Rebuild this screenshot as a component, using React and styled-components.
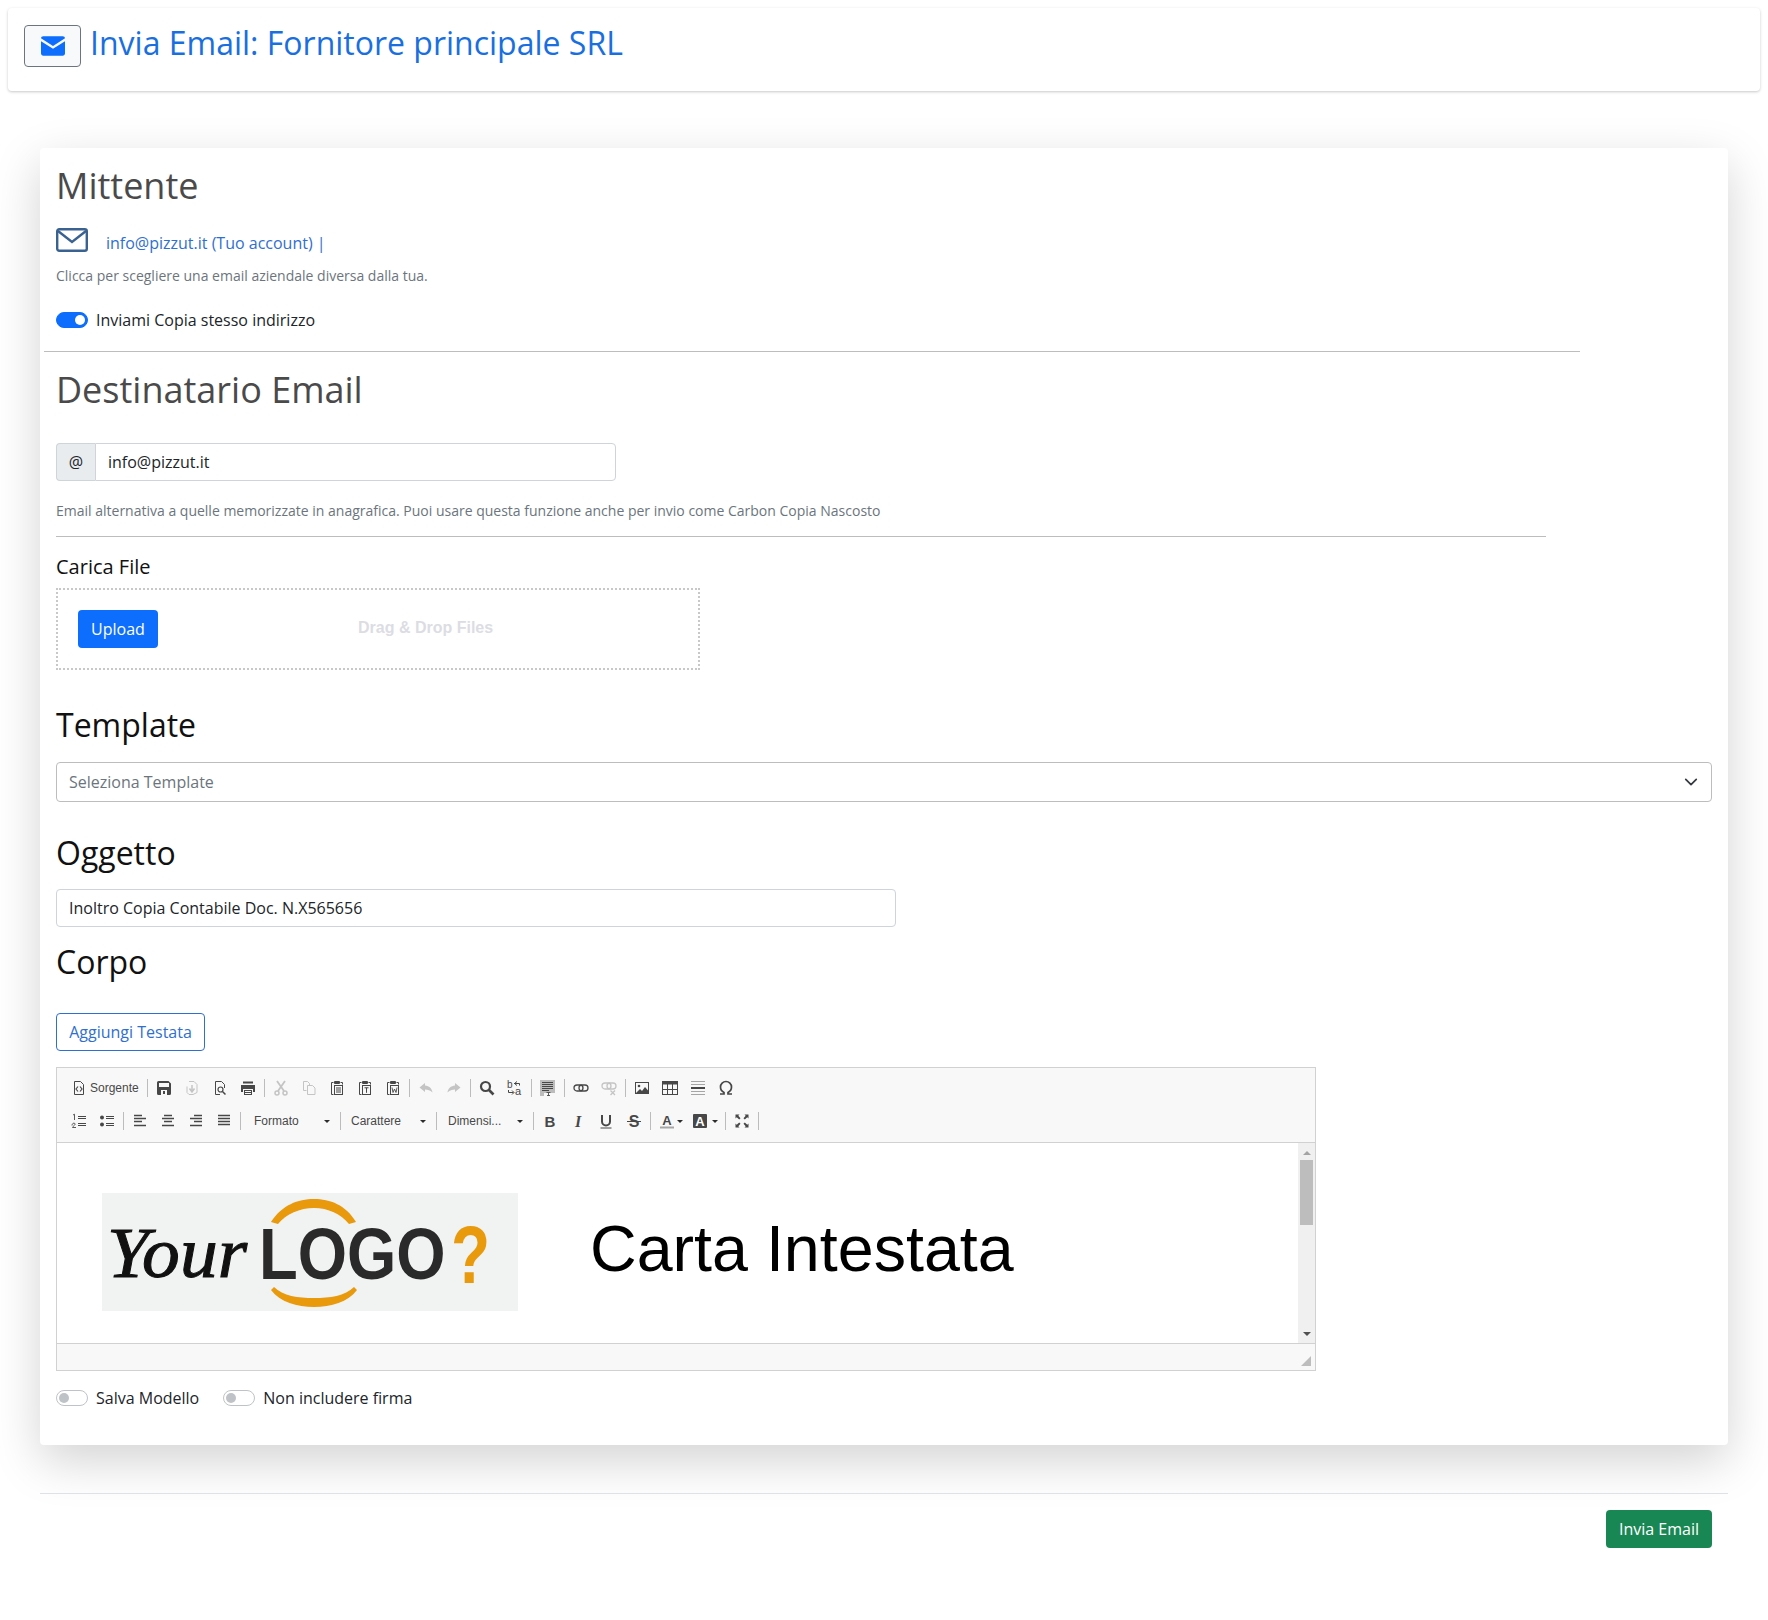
import styled, { createGlobalStyle } from "styled-components";

const GlobalStyle = createGlobalStyle`
  html, body { margin: 0; padding: 0; background: #fff; }
  body {
    font-family: "Open Sans", "Liberation Sans", sans-serif;
    font-size: 16px;
    line-height: 24px;
    color: #212529;
    min-height: 1620px;
  }
  * { box-sizing: border-box; }
`;

const DARK = "#474747";
const GREY = "#c4c4c4";

function Ico({ children, color = DARK }) {
  return (
    <svg width="16" height="16" viewBox="0 0 16 16" fill="none" stroke="none" style={{ color }}>
      {children}
    </svg>
  );
}

const icons = {
  source: (
    <Ico>
      <path d="M3.500 1.500h6l3 3v10h-9z" stroke="currentColor" />
      <path d="M7 6.500L5 9l2 2.500M9 6.500L11 9l-2 2.500" stroke="currentColor" strokeWidth="1.200" />
    </Ico>
  ),
  save: (
    <Ico>
      <path fillRule="evenodd" d="M1 2.500A1.500 1.500 0 0 1 2.500 1h10L15 3.500v10a1.500 1.500 0 0 1-1.500 1.500h-11A1.500 1.500 0 0 1 1 13.500zM3 3v4h10V3zM5 10v5h6v-5z" fill="currentColor" />
      <rect x="7" y="11" width="2" height="3" fill="currentColor" />
    </Ico>
  ),
  template: (
    <Ico color={GREY}>
      <path d="M5 1.500h5l3 3v8l-4 2H5l-2-2v-6" stroke="currentColor" />
      <path d="M8 5v6M5.500 8.500L8 12l2.500-3.500" stroke="currentColor" strokeWidth="1.500" />
    </Ico>
  ),
  preview: (
    <Ico>
      <path d="M8 14.500H3.500v-13h6l3 3V8" stroke="currentColor" />
      <circle cx="8.500" cy="9.500" r="2.500" stroke="currentColor" strokeWidth="1.200" />
      <path d="M10.500 11.500l3 3" stroke="currentColor" strokeWidth="1.500" />
    </Ico>
  ),
  print: (
    <Ico>
      <path d="M3 1.500h10v2H3z" fill="currentColor" />
      <path fillRule="evenodd" d="M1 5h14v7h-2V9H3v3H1z" fill="currentColor" />
      <path fillRule="evenodd" d="M4 10h8v5H4zM5 11v1h6v-1zM5 13v1h6v-1z" fill="currentColor" />
    </Ico>
  ),
  cut: (
    <Ico color={GREY}>
      <path d="M4 1l7 10M12 1L5 11" stroke="currentColor" strokeWidth="1.800" />
      <circle cx="4" cy="13" r="2" stroke="currentColor" strokeWidth="1.500" />
      <circle cx="12" cy="13" r="2" stroke="currentColor" strokeWidth="1.500" />
    </Ico>
  ),
  copy: (
    <Ico color={GREY}>
      <path d="M2.500 1.500h4l2 2v2M2.500 1.500v9h3" stroke="currentColor" />
      <path d="M6.500 5.500h5l2.500 2.500v6.500H6.500z" stroke="currentColor" />
    </Ico>
  ),
  paste: (
    <Ico>
      <path d="M4.500 2.500h-2v12h2" stroke="currentColor" />
      <path d="M11.500 2.500h2v2" stroke="currentColor" />
      <rect x="5" y="1" width="6" height="3" rx="1" fill="currentColor" />
      <rect x="5.500" y="5.500" width="8" height="9" stroke="currentColor" />
      <path d="M7 8h5M7 10h5M7 12h5" stroke="currentColor" />
    </Ico>
  ),
  pasteText: (
    <Ico>
      <path d="M4.500 2.500h-2v12h2" stroke="currentColor" />
      <path d="M11.500 2.500h2v2" stroke="currentColor" />
      <rect x="5" y="1" width="6" height="3" rx="1" fill="currentColor" />
      <rect x="5.500" y="5.500" width="8" height="9" stroke="currentColor" />
      <path d="M7.500 7.800h4M9.500 7.800v5" stroke="currentColor" />
    </Ico>
  ),
  pasteWord: (
    <Ico>
      <path d="M4.500 2.500h-2v12h2" stroke="currentColor" />
      <path d="M11.500 2.500h2v2" stroke="currentColor" />
      <rect x="5" y="1" width="6" height="3" rx="1" fill="currentColor" />
      <rect x="5.500" y="5.500" width="8" height="9" stroke="currentColor" />
      <path d="M7 7.500l1 5 1.500-3.500 1.500 3.500 1-5" stroke="currentColor" strokeWidth=".9" />
    </Ico>
  ),
  undo: (
    <Ico color={GREY}>
      <path d="M7 3L1.500 7.500 7 12V9.500c3 0 5 .8 7.500 3C14 8.500 11 5.800 7 5.500z" fill="currentColor" />
    </Ico>
  ),
  redo: (
    <Ico color={GREY}>
      <path d="M9 3l5.500 4.500L9 12V9.500c-3 0-5 .8-7.500 3C2 8.500 5 5.800 9 5.500z" fill="currentColor" />
    </Ico>
  ),
  search: (
    <Ico>
      <circle cx="6.500" cy="6.500" r="4.500" stroke="currentColor" strokeWidth="2.200" />
      <path d="M10 10l4.500 4.500" stroke="currentColor" strokeWidth="2.600" />
    </Ico>
  ),
  replace: (
    <Ico>
      <text x="0" y="8" fontSize="10" fontFamily="Liberation Sans" fill="currentColor">b</text>
      <text x="8" y="15" fontSize="11" fontFamily="Liberation Sans" fill="currentColor">a</text>
      <path d="M7 3.500h5.500v2M10 1.500L7.500 3.500 10 5.500" stroke="currentColor" />
      <path d="M1.500 10v2.500h5M5 10.500l2 2-2 2" stroke="currentColor" />
    </Ico>
  ),
  blocks: (
    <Ico>
      <rect x="0" y="0" width="15" height="13" fill="#bcbcbc" />
      <rect x="0" y="13" width="4" height="3" fill="#bcbcbc" />
      <path d="M2 2.500h11M2 4.500h11M2 6.500h11M2 8.500h11M2 10.500h7" stroke="currentColor" />
      <path d="M6.500 12.500h4M8.500 12.500v3M7 15.500h3" stroke="currentColor" strokeWidth=".9" />
    </Ico>
  ),
  link: (
    <Ico>
      <rect x="1" y="5" width="9" height="6" rx="3" stroke="currentColor" strokeWidth="1.300" />
      <rect x="6" y="5" width="9" height="6" rx="3" stroke="currentColor" strokeWidth="1.300" />
    </Ico>
  ),
  unlink: (
    <Ico color={GREY}>
      <rect x="1" y="3" width="9" height="6" rx="3" stroke="currentColor" strokeWidth="1.300" />
      <rect x="6" y="3" width="9" height="6" rx="3" stroke="currentColor" strokeWidth="1.300" />
      <path d="M9.500 10.500l4.500 4.500M14 10.500L9.500 15" stroke="currentColor" strokeWidth="1.300" />
    </Ico>
  ),
  image: (
    <Ico>
      <rect x="1.500" y="2.500" width="13" height="11" stroke="currentColor" />
      <circle cx="5" cy="6" r="1.300" fill="currentColor" />
      <path d="M2 13l4-4 2 2 3-4 3.500 4v2z" fill="currentColor" />
    </Ico>
  ),
  table: (
    <Ico>
      <rect x="0.500" y="1.500" width="15" height="13" stroke="currentColor" />
      <rect x="0.500" y="1.500" width="15" height="3" fill="currentColor" />
      <path d="M5.500 4v10M10.500 4v10M1 9.500h14" stroke="currentColor" />
    </Ico>
  ),
  hr: (
    <Ico>
      <path d="M1 1.500h14M1 4.500h14M1 11.500h14M1 14.500h14" stroke="#a6a6a6" />
      <path d="M1 8h14" stroke="currentColor" strokeWidth="2" />
    </Ico>
  ),
  omega: (
    <Ico>
      <path d="M2 14h4v-1.500C4 11.500 2.500 9.500 2.500 7A5.500 5.500 0 0 1 13.500 7c0 2.500-1.500 4.500-3.500 5.500V14h4" stroke="currentColor" strokeWidth="1.700" />
    </Ico>
  ),
  ol: (
    <Ico>
      <path d="M7 3.500h8M7 5.500h8M7 10.500h8M7 12.500h8" stroke="currentColor" />
      <path d="M2 2l1.500-.8V7M1 12.500c0-3 3.500-3 3-1-.2.800-2 1.500-2.500 3H5" stroke="currentColor" strokeWidth=".9" />
    </Ico>
  ),
  ul: (
    <Ico>
      <path d="M7 3.500h8M7 5.500h8M7 10.500h8M7 12.500h8" stroke="currentColor" />
      <circle cx="3" cy="4.500" r="2" fill="currentColor" />
      <circle cx="3" cy="11.500" r="2" fill="currentColor" />
    </Ico>
  ),
  left: (
    <Ico>
      <path d="M2 2.500h8M2 5.500h12M2 8.500h8M2 12.500h12" stroke="currentColor" strokeWidth="1.500" />
    </Ico>
  ),
  center: (
    <Ico>
      <path d="M4 2.500h8M2 5.500h12M4 8.500h8M2 12.500h12" stroke="currentColor" strokeWidth="1.500" />
    </Ico>
  ),
  right: (
    <Ico>
      <path d="M6 2.500h8M2 5.500h12M6 8.500h8M2 12.500h12" stroke="currentColor" strokeWidth="1.500" />
    </Ico>
  ),
  justify: (
    <Ico>
      <path d="M2 2.500h12M2 5.500h12M2 8.500h12M2 11.500h12" stroke="currentColor" strokeWidth="1.500" />
    </Ico>
  ),
  bold: (
    <Ico>
      <text x="8" y="13.500" textAnchor="middle" fontSize="15" fontWeight="700" fontFamily="Liberation Sans" fill="currentColor">B</text>
    </Ico>
  ),
  italic: (
    <Ico>
      <text x="8" y="13.500" textAnchor="middle" fontSize="16" fontWeight="700" fontStyle="italic" fontFamily="Liberation Serif" fill="currentColor">I</text>
    </Ico>
  ),
  underline: (
    <Ico>
      <path d="M4 2v6.500a4 4 0 0 0 8 0V2" stroke="currentColor" strokeWidth="2" />
      <path d="M2.500 15h11" stroke="currentColor" />
    </Ico>
  ),
  strike: (
    <Ico>
      <text x="8" y="14" textAnchor="middle" fontSize="16" fontWeight="700" fontFamily="Liberation Sans" fill="currentColor">S</text>
      <path d="M1 8.500h14" stroke="currentColor" />
    </Ico>
  ),
  textColor: (
    <Ico>
      <text x="8" y="11.500" textAnchor="middle" fontSize="13" fontWeight="700" fontFamily="Liberation Sans" fill="currentColor">A</text>
      <rect x="1" y="13.500" width="14" height="2" fill="#a6a6a6" />
    </Ico>
  ),
  bgColor: (
    <Ico>
      <rect x="1" y="1" width="14" height="14" rx="1" fill="currentColor" />
      <text x="8" y="12.500" textAnchor="middle" fontSize="13" fontWeight="700" fontFamily="Liberation Sans" fill="#fff">A</text>
    </Ico>
  ),
  maximize: (
    <Ico>
      <path d="M1.500 1.500h4l-1.200 1.200 2.200 2.500-1.300 1.300-2.500-2.200-1.200 1.200zM14.500 1.500h-4l1.200 1.200-2.200 2.500 1.300 1.300 2.500-2.200 1.200 1.200zM1.500 14.500h4l-1.200-1.200 2.200-2.500-1.300-1.300-2.500 2.200-1.200-1.200zM14.500 14.500h-4l1.200-1.200-2.200-2.500 1.300-1.300 2.500 2.200 1.200-1.200z" fill="currentColor" />
    </Ico>
  ),
};

const topTools = ["|", "save", "template", "preview", "print", "|", "cut", "copy", "paste", "pasteText", "pasteWord", "|", "undo", "redo", "|", "search", "replace", "|", "blocks", "|", "link", "unlink", "|", "image", "table", "hr", "omega"];

export default function App() {
  return (
    <>
      <GlobalStyle />
      <Header>
        <IconButton>
          <svg width="24" height="24" viewBox="0 0 16 16" fill="#0d6efd">
            <path d="M1.500 1.500h13c.8 0 1.500.6 1.500 1.400L8 8 0 2.900c0-.8.700-1.400 1.500-1.400z" />
            <path d="M0 4.800l8 5 8-5V13c0 .8-.7 1.500-1.500 1.500h-13C.7 14.500 0 13.800 0 13z" />
          </svg>
        </IconButton>
        <Title>Invia Email: Fornitore principale SRL</Title>
      </Header>

      <Card>
        <SectionTitle>Mittente</SectionTitle>
        <SenderRow>
          <svg width="32" height="24" viewBox="0 0 32 24" fill="none" stroke="#3a6291" strokeWidth="2.400">
            <rect x="1.200" y="1.200" width="29.600" height="21.600" rx="2" />
            <path d="M2 3l14 11L30 3" />
          </svg>
          <SenderLink>info@pizzut.it (Tuo account) |</SenderLink>
        </SenderRow>
        <Help $top={9}>Clicca per scegliere una email aziendale diversa dalla tua.</Help>
        <SwitchRow $top={22}>
          <Switch $on />
          <span>Inviami Copia stesso indirizzo</span>
        </SwitchRow>
        <Rule $left={-12} $width={1536} $top={19} />
        <SectionTitle $top={16}>Destinatario Email</SectionTitle>
        <InputGroup>
          <Addon>@</Addon>
          <GroupInput defaultValue="info@pizzut.it" />
        </InputGroup>
        <Help $top={19}>
          Email alternativa a quelle memorizzate in anagrafica. Puoi usare questa funzione anche per invio come Carbon Copia Nascosto
        </Help>
        <Rule $width={1490} $top={15} />
        <UploadLabel>Carica File</UploadLabel>
        <DropZone>
          <UploadButton>Upload</UploadButton>
          <DropText>Drag &amp; Drop Files</DropText>
        </DropZone>
        <FieldTitle $top={33}>Template</FieldTitle>
        <SelectBox>
          <span>Seleziona Template</span>
          <svg width="14" height="14" viewBox="0 0 16 16" fill="none" stroke="#343a40" strokeWidth="2" strokeLinecap="round" strokeLinejoin="round">
            <path d="M2 5l6 6 6-6" />
          </svg>
        </SelectBox>
        <FieldTitle $top={29}>Oggetto</FieldTitle>
        <SubjectInput defaultValue="Inoltro Copia Contabile Doc. N.X565656" />
        <FieldTitle $top={13}>Corpo</FieldTitle>
        <OutlineButton>Aggiungi Testata</OutlineButton>

        <Editor>
          <Toolbar>
            <ToolRow>
              <ToolButton $wide>
                {icons.source}
                <ToolLabel>Sorgente</ToolLabel>
              </ToolButton>
              {topTools.map((name, i) =>
                name === "|" ? <ToolSep key={i} /> : <ToolButton key={i}>{icons[name]}</ToolButton>
              )}
            </ToolRow>
            <ToolRow>
              <ToolButton>{icons.ol}</ToolButton>
              <ToolButton>{icons.ul}</ToolButton>
              <ToolSep />
              <ToolButton>{icons.left}</ToolButton>
              <ToolButton>{icons.center}</ToolButton>
              <ToolButton>{icons.right}</ToolButton>
              <ToolButton>{icons.justify}</ToolButton>
              <ToolSep />
              <Combo $width={95} $pad={11}>
                <span>Formato</span>
                <Caret />
              </Combo>
              <ToolSep />
              <Combo $width={91} $pad={8}>
                <span>Carattere</span>
                <Caret />
              </Combo>
              <ToolSep />
              <Combo $width={92} $pad={9}>
                <span>Dimensi...</span>
                <Caret />
              </Combo>
              <ToolSep />
              <ToolButton>{icons.bold}</ToolButton>
              <ToolButton>{icons.italic}</ToolButton>
              <ToolButton>{icons.underline}</ToolButton>
              <ToolButton>{icons.strike}</ToolButton>
              <ToolSep />
              <ColorButton $width={33} $gap={2}>
                {icons.textColor}
                <Caret />
              </ColorButton>
              <ColorButton $width={37} $gap={4}>
                {icons.bgColor}
                <Caret />
              </ColorButton>
              <ToolSep />
              <ToolButton>{icons.maximize}</ToolButton>
              <ToolSep />
            </ToolRow>
          </Toolbar>
          <EditorBody>
            <EditorContent>
              <svg width="416" height="118" viewBox="0 0 416 118">
                <rect width="416" height="118" fill="#f1f2f2" />
                <path d="M169 29C180 12 196 6 212 6s32 6 42 23l-7 2C239 21 226 15 212 15s-28 6-36 16z" fill="#e8990c" />
                <path d="M172 94c9 9 24 11 40 11s31-2 40-11l3 3c-9 12-26 17-43 17s-34-5-43-17z" fill="#e8990c" />
                <text transform="translate(5 84) scale(1.050 1)" fontFamily="Liberation Serif" fontStyle="italic" fontSize="72" stroke="#111" strokeWidth="1" fill="#111">Your</text>
                <text transform="translate(157 86) scale(.880 1)" fontFamily="Liberation Sans" fontWeight="700" fontSize="72" fill="#2b2a2b">LOGO</text>
                <text transform="translate(349 90) scale(.780 1)" fontFamily="Liberation Sans" fontWeight="700" fontSize="82" fill="#e8990c">?</text>
              </svg>
              <Letterhead>Carta Intestata</Letterhead>
            </EditorContent>
            <ScrollTrack>
              <ScrollArrow $up />
              <ScrollThumb />
              <ScrollArrow />
            </ScrollTrack>
          </EditorBody>
          <EditorFooter>
            <svg width="12" height="12" viewBox="0 0 12 12">
              <path d="M11 1v10H1z" fill="#bdbdbd" />
            </svg>
          </EditorFooter>
        </Editor>

        <Options>
          <SwitchRow>
            <Switch />
            <span>Salva Modello</span>
          </SwitchRow>
          <SwitchRow>
            <Switch />
            <span>Non includere firma</span>
          </SwitchRow>
        </Options>
      </Card>

      <Footer>
        <SendButton>Invia Email</SendButton>
      </Footer>
    </>
  );
}

const Header = styled.header`
  display: flex;
  align-items: flex-start;
  gap: 9px;
  height: 83px;
  margin: 8px 8px 0;
  padding: 17px 16px 0;
  background: #fff;
  border-radius: 4px;
  box-shadow: 0 1px 3px rgba(0, 0, 0, 0.22);
`;

const IconButton = styled.button`
  display: flex;
  align-items: center;
  justify-content: center;
  width: 57px;
  height: 42px;
  padding: 0;
  background: #f8f9fa;
  border: 1px solid #6c757d;
  border-radius: 4px;
`;

const Title = styled.h1`
  margin: 0;
  font-size: 32px;
  font-weight: 400;
  line-height: 36px;
  color: #1a6fe0;
`;

const Card = styled.main`
  margin: 57px 40px 0;
  padding: 16px 16px 24px;
  height: 1297px;
  background: #fff;
  border-radius: 4px;
  box-shadow: 0 16px 48px rgba(0, 0, 0, 0.175);
`;

const SectionTitle = styled.h2`
  margin: ${(p) => p.$top || 0}px 0 0;
  font-size: 36px;
  font-weight: 400;
  line-height: 44px;
  color: #4a4a4a;
`;

const SenderRow = styled.div`
  display: flex;
  align-items: center;
  gap: 18px;
  margin-top: 16px;
  height: 32px;
`;

const SenderLink = styled.a`
  color: #2f6fd0;
  margin-top: 6px;
`;

const Help = styled.p`
  margin: ${(p) => p.$top}px 0 0;
  font-size: 14px;
  line-height: 21px;
  color: #6c757d;
`;

const SwitchRow = styled.label`
  display: flex;
  align-items: center;
  gap: 8px;
  margin-top: ${(p) => p.$top || 0}px;
  height: 24px;
`;

const Switch = styled.span`
  position: relative;
  display: inline-block;
  width: 32px;
  height: 16px;
  border-radius: 8px;
  background: ${(p) => (p.$on ? "#0d6efd" : "#fff")};
  border: 1px solid ${(p) => (p.$on ? "#0d6efd" : "#bfc3c7")};

  &::after {
    content: "";
    position: absolute;
    top: 2px;
    ${(p) => (p.$on ? "right: 2px;" : "left: 2px;")}
    width: 10px;
    height: 10px;
    border-radius: 50%;
    background: ${(p) => (p.$on ? "#fff" : "#bfc3c7")};
  }
`;

const Rule = styled.hr`
  width: ${(p) => p.$width}px;
  margin: ${(p) => p.$top}px 0 0 ${(p) => p.$left || 0}px;
  border: 0;
  border-top: 1px solid #bdbdbd;
`;

const InputGroup = styled.div`
  display: flex;
  width: 560px;
  height: 38px;
  margin-top: 31px;
`;

const Addon = styled.span`
  display: flex;
  align-items: center;
  justify-content: center;
  width: 39px;
  background: #e9ecef;
  border: 1px solid #ced4da;
  border-right: 0;
  border-radius: 4px 0 0 4px;
  color: #212529;
  font-size: 16px;
`;

const GroupInput = styled.input`
  flex: 1;
  min-width: 0;
  padding: 6px 12px;
  font: inherit;
  color: #212529;
  border: 1px solid #ced4da;
  border-radius: 0 4px 4px 0;
  outline: none;
`;

const UploadLabel = styled.div`
  margin-top: 15px;
  font-size: 20px;
  line-height: 30px;
  color: #111;
`;

const DropZone = styled.div`
  position: relative;
  display: flex;
  align-items: center;
  width: 644px;
  height: 82px;
  margin-top: 6px;
  padding-left: 20px;
  border: 2px dotted #c8c8c8;
`;

const UploadButton = styled.button`
  width: 80px;
  height: 38px;
  padding: 0;
  font: inherit;
  color: #fff;
  background: #0d6efd;
  border: 0;
  border-radius: 4px;
`;

const DropText = styled.span`
  position: absolute;
  left: 300px;
  top: 28px;
  font-family: "Liberation Sans", sans-serif;
  font-size: 16px;
  font-weight: 700;
  line-height: 20px;
  color: #dcdde3;
`;

const FieldTitle = styled.h3`
  margin: ${(p) => p.$top}px 0 0;
  font-size: 32px;
  font-weight: 400;
  line-height: 44px;
  color: #111;
`;

const SelectBox = styled.div`
  display: flex;
  align-items: center;
  justify-content: space-between;
  width: 1656px;
  height: 40px;
  margin-top: 15px;
  padding: 0 13px 0 12px;
  color: #6c757d;
  border: 1px solid #bdbdbd;
  border-radius: 4px;
`;

const SubjectInput = styled.input`
  display: block;
  width: 840px;
  height: 38px;
  margin-top: 14px;
  padding: 6px 12px;
  font: inherit;
  color: #212529;
  border: 1px solid #ced4da;
  border-radius: 4px;
  outline: none;
`;

const OutlineButton = styled.button`
  display: block;
  width: 149px;
  height: 38px;
  margin-top: 29px;
  padding: 0;
  font: inherit;
  color: #2f6fd0;
  background: #fff;
  border: 1px solid #2f6fd0;
  border-radius: 4px;
`;

const Editor = styled.div`
  width: 1260px;
  height: 304px;
  margin-top: 16px;
  display: flex;
  flex-direction: column;
  border: 1px solid #d1d1d1;
`;

const Toolbar = styled.div`
  height: 75px;
  padding: 4px 8px 0;
  background: #f8f8f8;
  border-bottom: 1px solid #d1d1d1;
  font-family: "Liberation Sans", sans-serif;
`;

const ToolRow = styled.div`
  display: flex;
  align-items: center;
  height: 32px;
  margin-bottom: 1px;
`;

const ToolButton = styled.span`
  display: flex;
  align-items: center;
  flex: none;
  width: ${(p) => (p.$wide ? "auto" : "28px")};
  height: 24px;
  padding: 0 6px;
`;

const ToolLabel = styled.span`
  margin-left: 3px;
  font-size: 12px;
  line-height: 16px;
  color: #484848;
`;

const ToolSep = styled.span`
  flex: none;
  width: 1px;
  height: 18px;
  margin: 0 2px;
  background: #bcbcbc;
`;

const Combo = styled.span`
  display: flex;
  align-items: center;
  justify-content: space-between;
  flex: none;
  width: ${(p) => p.$width}px;
  height: 24px;
  padding: 0 8px 0 ${(p) => p.$pad}px;
  font-size: 12px;
  color: #484848;
`;

const Caret = styled.span`
  flex: none;
  width: 0;
  height: 0;
  border-left: 3px solid transparent;
  border-right: 3px solid transparent;
  border-top: 3px solid #2c2c2c;
`;

const ColorButton = styled.span`
  display: flex;
  align-items: center;
  gap: ${(p) => p.$gap}px;
  flex: none;
  width: ${(p) => p.$width}px;
  height: 24px;
  padding-left: 6px;
`;

const EditorBody = styled.div`
  display: flex;
  height: 200px;
`;

const EditorContent = styled.div`
  flex: 1;
  display: flex;
  align-items: center;
  gap: 72px;
  padding: 18px 0 0 45px;
  background: #fff;
`;

const Letterhead = styled.span`
  margin-top: -6px;
  font-family: "Liberation Sans", sans-serif;
  font-size: 64.6px;
  line-height: 72px;
  color: #000;
`;

const ScrollTrack = styled.div`
  display: flex;
  flex-direction: column;
  align-items: center;
  width: 17px;
  padding: 4px 0 3px;
  background: #f0f0f0;
`;

const ScrollThumb = styled.div`
  width: 13px;
  height: 65px;
  margin: 1px 0 auto;
  background: #bdbdbd;
`;

const ScrollArrow = styled.span`
  width: 0;
  height: 0;
  margin: 4px 0;
  border-left: 4px solid transparent;
  border-right: 4px solid transparent;
  ${(p) =>
    p.$up
      ? "border-bottom: 4px solid #a3a3a3;"
      : "border-top: 4px solid #505050;"}
`;

const EditorFooter = styled.div`
  display: flex;
  align-items: flex-end;
  justify-content: flex-end;
  flex: 1;
  padding: 0 3px 3px 0;
  background: #f8f8f8;
  border-top: 1px solid #d1d1d1;
`;

const Options = styled.div`
  display: flex;
  gap: 24px;
  margin-top: 15px;
`;

const Footer = styled.footer`
  display: flex;
  justify-content: flex-end;
  margin: 48px 40px 0;
  padding: 16px 16px 0;
  border-top: 1px solid #dee2e6;
`;

const SendButton = styled.button`
  width: 106px;
  height: 38px;
  padding: 0;
  font: inherit;
  color: #fff;
  background: #198754;
  border: 0;
  border-radius: 4px;
`;
